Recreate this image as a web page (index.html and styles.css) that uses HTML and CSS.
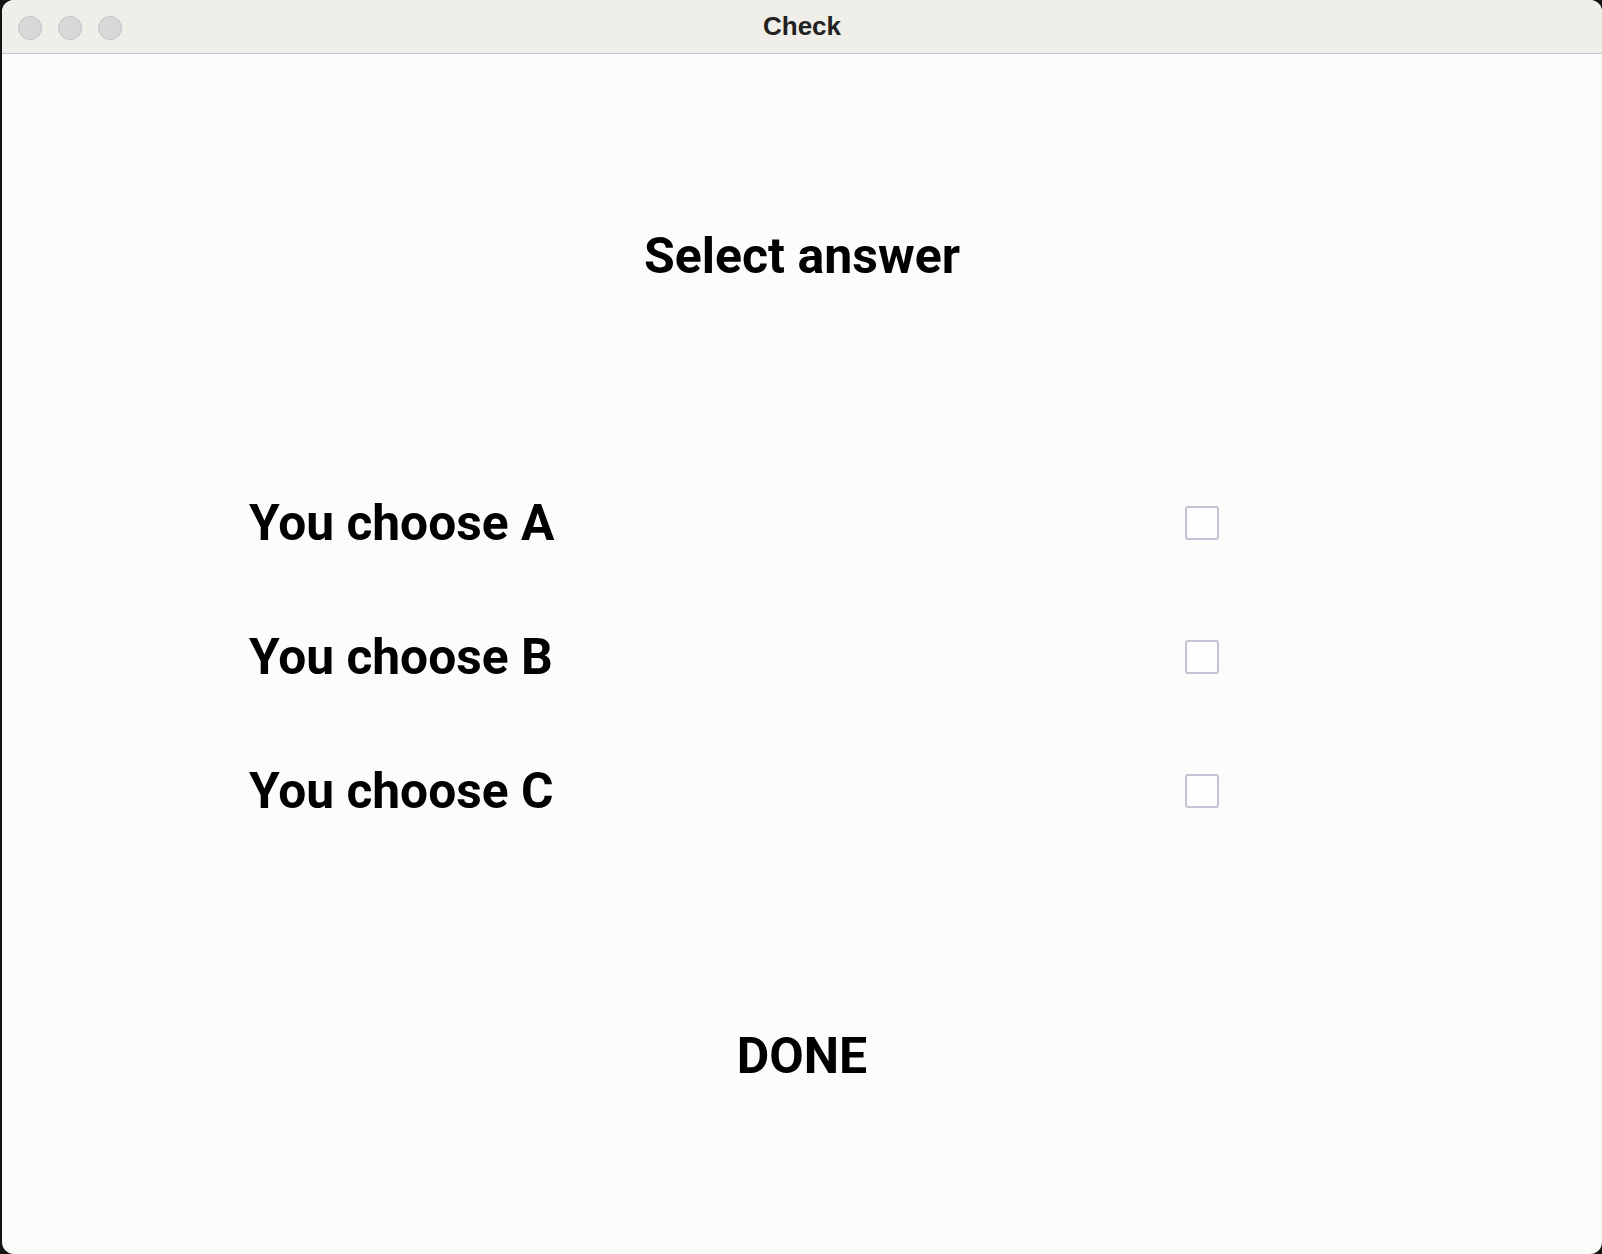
FILE: index.html
```html
<!DOCTYPE html>
<html>
<head>
<meta charset="utf-8">
<title>Check</title>
<link rel="stylesheet" href="styles.css">
</head>
<body>
<div class="window">
  <div class="titlebar">
    <div class="lights">
      <span class="light"></span>
      <span class="light"></span>
      <span class="light"></span>
    </div>
    <div class="wtitle">Check</div>
  </div>
  <div class="content">
    <h1 class="heading">Select answer</h1>
    <div class="options">
      <label class="option">
        <span class="opt-text">You choose A</span>
        <span class="box"></span>
      </label>
      <label class="option">
        <span class="opt-text">You choose B</span>
        <span class="box"></span>
      </label>
      <label class="option">
        <span class="opt-text">You choose C</span>
        <span class="box"></span>
      </label>
    </div>
    <div class="done">DONE</div>
  </div>
</div>
</body>
</html>
```

FILE: styles.css
```css
html, body {
  margin: 0;
  padding: 0;
}
body {
  background: #141414;
  width: 1602px;
  height: 1254px;
  overflow: hidden;
}
.window {
  margin-left: 2px;
  width: 1600px;
  height: 1254px;
  border-radius: 12px;
  overflow: hidden;
  background: #fcfcfa;
  display: flex;
  flex-direction: column;
}
.titlebar {
  height: 53px;
  border-bottom: 1px solid #c6c6d6;
  background: #efeee8;
  display: flex;
  align-items: center;
  justify-content: center;
  position: relative;
}
.lights {
  position: absolute;
  left: 16px;
  top: 16px;
  display: flex;
  gap: 16px;
}
.light {
  width: 22px;
  height: 22px;
  border-radius: 50%;
  background: #d8d8d8;
  border: 1px solid #c2c2cc;
}
.wtitle {
  font-family: "Liberation Sans", Arial, sans-serif;
  font-weight: bold;
  font-size: 26px;
  color: #222;
}
.content {
  flex: 1;
  display: flex;
  flex-direction: column;
  font-family: Roboto, "Liberation Sans", sans-serif;
  font-weight: bold;
  color: #000;
}
.heading {
  margin: 178px 0 0 0;
  text-align: center;
  font-size: 50px;
  line-height: 49px;
  font-weight: bold;
}
.options {
  margin-top: 217px;
  margin-left: 247px;
  width: 970px;
  display: flex;
  flex-direction: column;
  gap: 84px;
}
.option {
  display: flex;
  align-items: center;
  justify-content: space-between;
  height: 50px;
}
.opt-text {
  font-size: 49.7px;
  line-height: 50px;
}
.box {
  width: 30px;
  height: 30px;
  border: 2px solid #c3c3d3;
  border-radius: 3px;
  background: #fdfdfd;
}
.done {
  margin-top: 216px;
  text-align: center;
  font-size: 50px;
  line-height: 49px;
}
```
